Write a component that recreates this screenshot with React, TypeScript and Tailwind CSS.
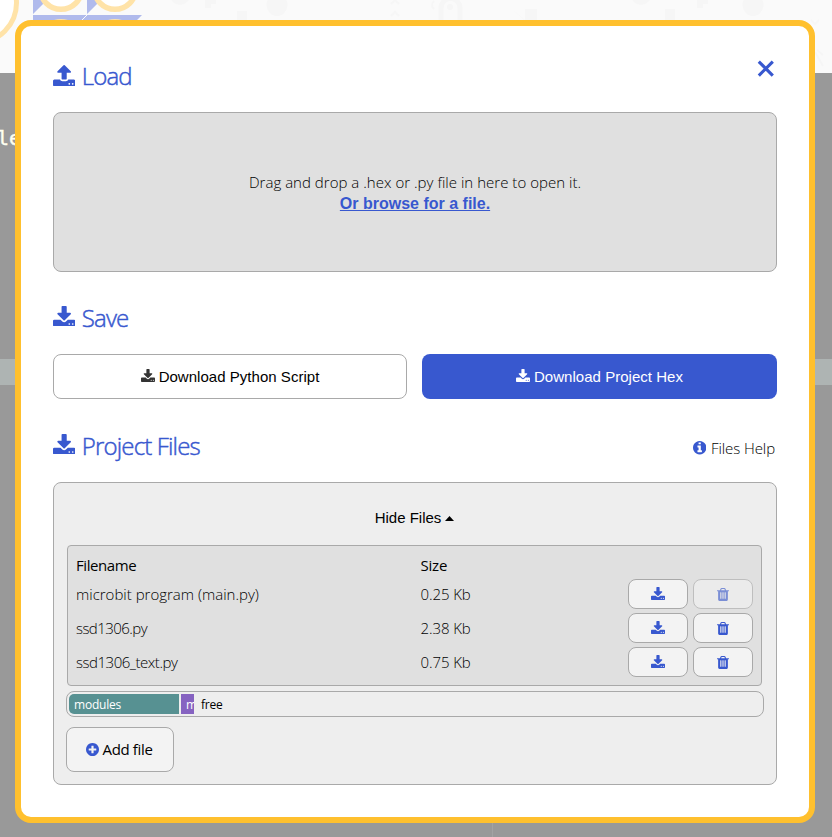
import type { ReactNode } from "react";

const ICONS = {
  download: {
    box: "64 0 1664 1536",
    d: "M1344 1344q0-26-19-45t-45-19-45 19-19 45 19 45 45 19 45-19 19-45zm256 0q0-26-19-45t-45-19-45 19-19 45 19 45 45 19 45-19 19-45zm128-224v320q0 40-28 68t-68 28h-1472q-40 0-68-28t-28-68v-320q0-40 28-68t68-28h465l135 136q58 56 136 56t136-56l136-136h464q40 0 68 28t28 68zm-325-569q17 41-14 70l-448 448q-18 19-45 19t-45-19l-448-448q-31-29-14-70 17-39 59-39h256v-448q0-26 19-45t45-19h256q26 0 45 19t19 45v448h256q42 0 59 39z",
  },
  upload: {
    box: "64 64 1664 1600",
    d: "M1344 1472q0-26-19-45t-45-19-45 19-19 45 19 45 45 19 45-19 19-45zm256 0q0-26-19-45t-45-19-45 19-19 45 19 45 45 19 45-19 19-45zm128-224v320q0 40-28 68t-68 28h-1472q-40 0-68-28t-28-68v-320q0-40 28-68t68-28h427q21 56 70.5 92t110.5 36h256q61 0 110.5-36t70.5-92h427q40 0 68 28t28 68zm-325-648q-17 40-59 40h-256v448q0 26-19 45t-45 19h-256q-26 0-45-19t-19-45v-448h-256q-42 0-59-40-17-39 14-69l448-448q18-19 45-19t45 19l448 448q31 30 14 69z",
  },
  trash: {
    box: "192 128 1408 1536",
    d: "M704 1376v-704q0-14-9-23t-23-9h-64q-14 0-23 9t-9 23v704q0 14 9 23t23 9h64q14 0 23-9t9-23zm256 0v-704q0-14-9-23t-23-9h-64q-14 0-23 9t-9 23v704q0 14 9 23t23 9h64q14 0 23-9t9-23zm256 0v-704q0-14-9-23t-23-9h-64q-14 0-23 9t-9 23v704q0 14 9 23t23 9h64q14 0 23-9t9-23zm-544-992h448l-48-117q-7-9-17-11h-317q-10 2-17 11zm928 32v64q0 14-9 23t-23 9h-96v948q0 83-47 143.5t-113 60.5h-832q-66 0-113-58.5t-47-141.5v-952h-96q-14 0-23-9t-9-23v-64q0-14 9-23t23-9h309l70-167q15-37 54-63t79-26h320q40 0 79 26t54 63l70 167h309q14 0 23 9t9 23z",
  },
  info: {
    box: "128 128 1536 1536",
    d: "M1152 1376v-160q0-14-9-23t-23-9h-96v-512q0-14-9-23t-23-9h-320q-14 0-23 9t-9 23v160q0 14 9 23t23 9h96v320h-96q-14 0-23 9t-9 23v160q0 14 9 23t23 9h448q14 0 23-9t9-23zm-128-896v-160q0-14-9-23t-23-9h-192q-14 0-23 9t-9 23v160q0 14 9 23t23 9h192q14 0 23-9t9-23zm640 416q0 209-103 385.5t-279.5 279.5-385.5 103-385.5-103-279.5-279.5-103-385.5 103-385.5 279.5-279.5 385.5-103 385.5 103 279.5 279.5 103 385.5z",
  },
  plus: {
    box: "128 128 1536 1536",
    d: "M1344 960v-128q0-26-19-45t-45-19h-256v-256q0-26-19-45t-45-19h-128q-26 0-45 19t-19 45v256h-256q-26 0-45 19t-19 45v128q0 26 19 45t45 19h256v256q0 26 19 45t45 19h128q26 0 45-19t19-45v-256h256q26 0 45-19t19-45zm320-64q0 209-103 385.5t-279.5 279.5-385.5 103-385.5-103-279.5-279.5-103-385.5 103-385.5 279.5-279.5 385.5-103 385.5 103 279.5 279.5 103 385.5z",
  },
};

function Icon({ name, className }: { name: keyof typeof ICONS; className: string }) {
  return (
    <svg viewBox={ICONS[name].box} className={`shrink-0 fill-current ${className}`} aria-hidden="true">
      <path d={ICONS[name].d} />
    </svg>
  );
}

function Heading({ icon, children }: { icon: "upload" | "download"; children: ReactNode }) {
  return (
    <h2 className="flex h-8 items-start text-[24px] leading-[31px] font-light tracking-[-0.84px] text-[#3858cf]">
      <Icon name={icon} className={icon === "upload" ? "mt-[4.5px] h-[21.4px] w-[22.3px]" : "mt-[3.5px] h-[20.6px] w-[22.3px]"} />
      <span className="ml-[6.5px] [-webkit-text-stroke:0.45px_#3858cf]">{children}</span>
    </h2>
  );
}

const FILES = [
  { name: "microbit program (main.py)", size: "0.25 Kb", tracking: "", locked: true },
  { name: "ssd1306.py", size: "2.38 Kb", tracking: "tracking-[-0.55px]", locked: false },
  { name: "ssd1306_text.py", size: "0.75 Kb", tracking: "tracking-[-0.47px]", locked: false },
];

const SMALL_BUTTON =
  "flex h-[30px] w-[60px] items-center justify-center rounded-[8px] border border-[#a9a9a9] bg-[#f3f3f3] pr-px text-[#3858cf]";

function Backdrop() {
  return (
    <div className="h-full">
      <div className="h-[73px] bg-[#fafafa]">
        <svg width="832" height="73" viewBox="0 0 832 73" className="block">
          <circle cx="-23" cy="3" r="39.5" fill="#fff" stroke="#ffe3a8" strokeWidth="5" />
          <path d="M33 0H47L33 14ZM87 0H101L87 14Z" fill="#b0baec" />
          <path d="M33 15H87V20H33ZM87 15H142L137 20H87Z" fill="#b0baec" />
          <path d="M87 15L82 20" stroke="#fafafa" strokeWidth="1" />
          <circle cx="61" cy="-11.5" r="20.8" fill="#fff" stroke="#ffe3a8" strokeWidth="5.5" />
          <circle cx="115" cy="-11.5" r="20.8" fill="#fff" stroke="#ffe3a8" strokeWidth="5.5" />
          <path d="M54 20Q61 18 68 20ZM108 20Q115 18 122 20Z" fill="#ffe3a8" />
          <g fill="#f6f6f6">
            <ellipse cx="753" cy="5" rx="10.5" ry="11" />
            <ellipse cx="277" cy="5" rx="10.5" ry="11" />
            <circle cx="641" cy="-5" r="10" />
            <circle cx="180" cy="-5" r="10" />
            <rect x="665" y="9" width="10" height="11" />
            <rect x="237" y="11" width="10" height="9" />
            <path d="M697 0H708V4H703V8H697Z" />
            <path d="M205 0H216V4H211V8H205Z" />
            <path d="M512 9L525 20V9H537V20H524Z" />
          </g>
          <g fill="none" stroke="#f6f6f6">
            <path d="M441 20V8A9.500 9.500 0 0 1 460 8V20" strokeWidth="5" />
            <path d="M434 1A5 5 0 0 0 434 9M391 16l4-4 4 4M391 4l4-4 4 4" strokeWidth="2" />
            <path d="M811 20l4 4 4-4M815 52l8 14M817 50l6 5" strokeWidth="2" />
          </g>
          <circle cx="450" cy="7" r="3" fill="#f6f6f6" />
        </svg>
      </div>
      <div className="flex h-[286px] items-start bg-[#999] pt-[51px]">
        <span className="-ml-[3px] font-['DejaVu_Sans_Mono',monospace] text-[20px] leading-7 text-[#fffff0] [-webkit-text-stroke:0.4px_#fffff0]">
          le
        </span>
      </div>
      <div className="h-[26px] bg-[#aeb4b3]" />
      <div className="flex h-[452px] items-end bg-[#999]">
        <div className="ml-[492px] h-[14px] w-px bg-[#a3a3a3]" />
      </div>
    </div>
  );
}

export default function App() {
  return (
    <div className="relative h-[837px] w-[832px] overflow-hidden font-['Open_Sans','Noto_Sans',sans-serif] text-black">
      <Backdrop />
      <div className="absolute top-[20px] left-[15px] flex h-[803px] w-[800px] flex-col rounded-[16px] border-[6px] border-[#ffc02e] bg-white px-[32px]">
        <div className="flex justify-between pt-[34px]">
          <Heading icon="upload">Load</Heading>
          <button className="mr-[2px] h-[18px] w-[18px] text-[#3858cf]" aria-label="Close">
            <svg viewBox="0 0 18 18" className="block h-[18px] w-[18px]">
              <path d="M1.800 1.600L15.800 15.600M15.800 1.600L1.800 15.600" stroke="currentColor" strokeWidth="3.1" />
            </svg>
          </button>
        </div>

        <div className="mt-[20px] flex h-[160px] shrink-0 flex-col items-center rounded-[8px] border border-[#a9a9a9] bg-[#e0e0e0] pt-[59px]">
          <p className="text-[15px] leading-[21px] font-light tracking-[0.025px]">Drag and drop a .hex or .py file in here to open it.</p>
          <a className="font-['Liberation_Sans',Arial,sans-serif] text-[16px] leading-[21px] font-bold text-[#3858cf] underline">
            Or browse for a file.
          </a>
        </div>

        <div className="mt-[30px]">
          <Heading icon="download">Save</Heading>
        </div>
        <div className="mt-[20px] flex h-[45px] shrink-0 gap-[15px] font-['Liberation_Sans',Arial,sans-serif] text-[15px] tracking-[0.03px]">
          <button className="flex w-[354px] items-center justify-center gap-[4px] rounded-[8px] border border-[#a9a9a9] bg-white">
            <Icon name="download" className="-mt-[2px] h-[12.9px] w-[14px] text-[#333]" />
            <span className="pt-[2px]">Download Python Script</span>
          </button>
          <button className="flex w-[355px] items-center justify-center gap-[4px] rounded-[8px] bg-[#3858cf] text-white">
            <Icon name="download" className="-mt-[2px] h-[12.9px] w-[14px]" />
            <span className="pt-[2px]">Download Project Hex</span>
          </button>
        </div>

        <div className="mt-[31px] flex justify-between">
          <Heading icon="download">Project Files</Heading>
          <a className="mt-[2px] mr-[2px] flex h-8 items-center gap-[5px] text-[15px] font-light">
            <Icon name="info" className="h-[13.400px] w-[13.400px] text-[#3858cf]" />
            <span className="tracking-[-0.08px]">Files Help</span>
          </a>
        </div>

        <div className="mt-[18px] flex h-[303px] shrink-0 flex-col rounded-[8px] border border-[#a9a9a9] bg-[#eee] px-[12px]">
          <div className="flex h-[62px] items-center justify-center gap-[4px] pt-[8px] pr-px font-['Liberation_Sans',Arial,sans-serif] text-[15px]">
            Hide Files
            <svg viewBox="0 0 9 5" className="h-[5px] w-[9px]">
              <path d="M4.500 0L9 5H0Z" />
            </svg>
          </div>

          <div className="mr-[2px] ml-px h-[141px] rounded-[4px] border border-[#a9a9a9] bg-[#e0e0e0] pr-[8px] pl-[8px] text-[15px]">
            <div className="flex h-[33px] pt-[9px] leading-5">
              <span className="w-[344.5px] tracking-[-0.42px]">Filename</span>
              <span className="tracking-[-0.2px]">Size</span>
            </div>
            <div className="flex flex-col gap-[4px] font-light">
              {FILES.map((f) => (
                <div key={f.name} className="flex h-[30px] items-center">
                  <span className={`w-[344.5px] ${f.tracking}`}>{f.name}</span>
                  <span className="w-[207.5px] tracking-[-0.1px]">{f.size}</span>
                  <div className="flex gap-[5px]">
                    <button className={SMALL_BUTTON}>
                      <Icon name="download" className="-mt-[2px] h-[13px] w-[14px]" />
                    </button>
                    <button className={`${SMALL_BUTTON} ${f.locked ? "opacity-60" : ""}`}>
                      <Icon name="trash" className="h-[13px] w-[12px]" />
                    </button>
                  </div>
                </div>
              ))}
            </div>
          </div>

          <div className="mt-[5px] flex h-[26px] w-[698px] shrink-0 gap-[2px] rounded-[8px] border border-[#a9a9a9] p-[2px] text-[12px] leading-[21px] text-white">
            <div className="h-[20px] w-[110px] rounded-l-[5px] bg-[#579192] pl-[5px] tracking-[-0.2px]">modules</div>
            <div className="h-[20px] w-[13px] overflow-hidden bg-[#8663c1] pl-[5px]">m</div>
            <div className="pl-[5px] tracking-[-0.2px] text-black">free</div>
          </div>

          <button className="mt-[10px] flex h-[45px] w-[108px] items-center justify-center gap-[4px] rounded-[8px] border border-[#a9a9a9] bg-[#f3f3f3] pr-[2px] text-[15px]">
            <Icon name="plus" className="h-[13px] w-[13px] text-[#3858cf]" />
            <span className="tracking-[-0.35px]">Add file</span>
          </button>
        </div>
      </div>
    </div>
  );
}
